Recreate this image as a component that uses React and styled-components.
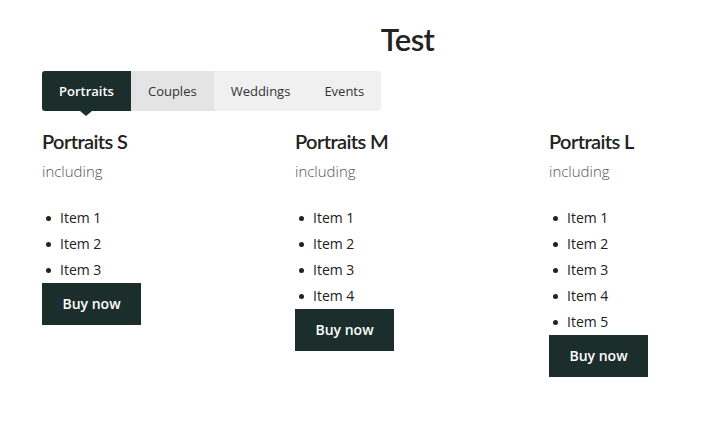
import React, { useState } from "react";
import styled, { createGlobalStyle } from "styled-components";

const Global = createGlobalStyle`
  html, body { margin: 0; padding: 0; background: #fff; }
  body { font-family: "Lato", "Noto Sans", sans-serif; color: #222; }
  * { box-sizing: border-box; }
`;

const Page = styled.div`
  padding: 20px 42px 0 42px;
`;

const Title = styled.h1`
  margin: 0;
  padding-left: 100px;
  text-align: center;
  font-family: "Lato", sans-serif;
  font-weight: 600;
  font-size: 31px;
  line-height: 38px;
  color: #222;
  letter-spacing: -0.6px;
`;

const Tabs = styled.div`
  display: inline-flex;
  margin-top: 13px;
  background: #f0f0f0;
  border-radius: 3px;
  height: 40px;
`;

const Tab = styled.button`
  position: relative;
  border: none;
  margin: 0;
  padding: 0 17px;
  height: 40px;
  font-family: "Open Sans", sans-serif;
  font-size: 13px;
  font-weight: ${(p) => (p.$active ? 600 : 400)};
  cursor: pointer;
  border-radius: ${(p) => (p.$first ? "3px 0 0 3px" : "0")};
  background: ${(p) => (p.$active ? "#1c2e2b" : p.$hover ? "#e4e4e4" : "transparent")};
  color: ${(p) => (p.$active ? "#fff" : "#333")};
  &::after {
    content: "";
    display: ${(p) => (p.$active ? "block" : "none")};
    position: absolute;
    left: 50%;
    bottom: -5px;
    margin-left: -6px;
    border-left: 6px solid transparent;
    border-right: 6px solid transparent;
    border-top: 5px solid #1c2e2b;
  }
`;

const Grid = styled.div`
  display: grid;
  grid-template-columns: 253px 254px 1fr;
  margin-top: 17px;
  align-items: start;
`;

const Col = styled.div`
  display: flex;
  flex-direction: column;
  align-items: flex-start;
`;

const PlanName = styled.h2`
  margin: 0;
  font-family: "Lato", sans-serif;
  font-weight: 600;
  font-size: 20px;
  line-height: 26px;
  color: #222;
  letter-spacing: -0.6px;
`;

const Sub = styled.div`
  margin-top: 7px;
  font-family: "Open Sans", sans-serif;
  font-weight: 300;
  font-size: 15px;
  line-height: 20px;
  color: #555;
`;

const List = styled.ul`
  margin: 24px 0 0 0;
  padding: 0 0 0 18px;
  list-style: none;
`;

const Item = styled.li`
  position: relative;
  font-family: "Open Sans", sans-serif;
  font-size: 14px;
  line-height: 26px;
  color: #222;
  &::before {
    content: "";
    position: absolute;
    left: -14px;
    top: 11px;
    width: 5px;
    height: 5px;
    border-radius: 50%;
    background: #222;
  }
`;

const Buy = styled.button`
  border: none;
  margin: 0;
  width: 99px;
  height: 42px;
  padding: 0 0 2px 0;
  background: #1c2e2b;
  color: #fff;
  font-family: "Open Sans", sans-serif;
  font-weight: 600;
  font-size: 14px;
  cursor: pointer;
`;

const tabs = ["Portraits", "Couples", "Weddings", "Events"];

const plans = [
  { name: "Portraits S", items: 3 },
  { name: "Portraits M", items: 4 },
  { name: "Portraits L", items: 5 },
];

export default function App() {
  const [active, setActive] = useState(0);
  return (
    <Page>
      <Global />
      <Title>Test</Title>
      <Tabs>
        {tabs.map((t, i) => (
          <Tab
            key={t}
            $first={i === 0}
            $active={i === active}
            $hover={i === 1}
            onClick={() => setActive(i)}
          >
            {t}
          </Tab>
        ))}
      </Tabs>
      <Grid>
        {plans.map((p) => (
          <Col key={p.name}>
            <PlanName>{p.name}</PlanName>
            <Sub>including</Sub>
            <List>
              {Array.from({ length: p.items }, (_, i) => (
                <Item key={i}>Item {i + 1}</Item>
              ))}
            </List>
            <Buy>Buy now</Buy>
          </Col>
        ))}
      </Grid>
    </Page>
  );
}
